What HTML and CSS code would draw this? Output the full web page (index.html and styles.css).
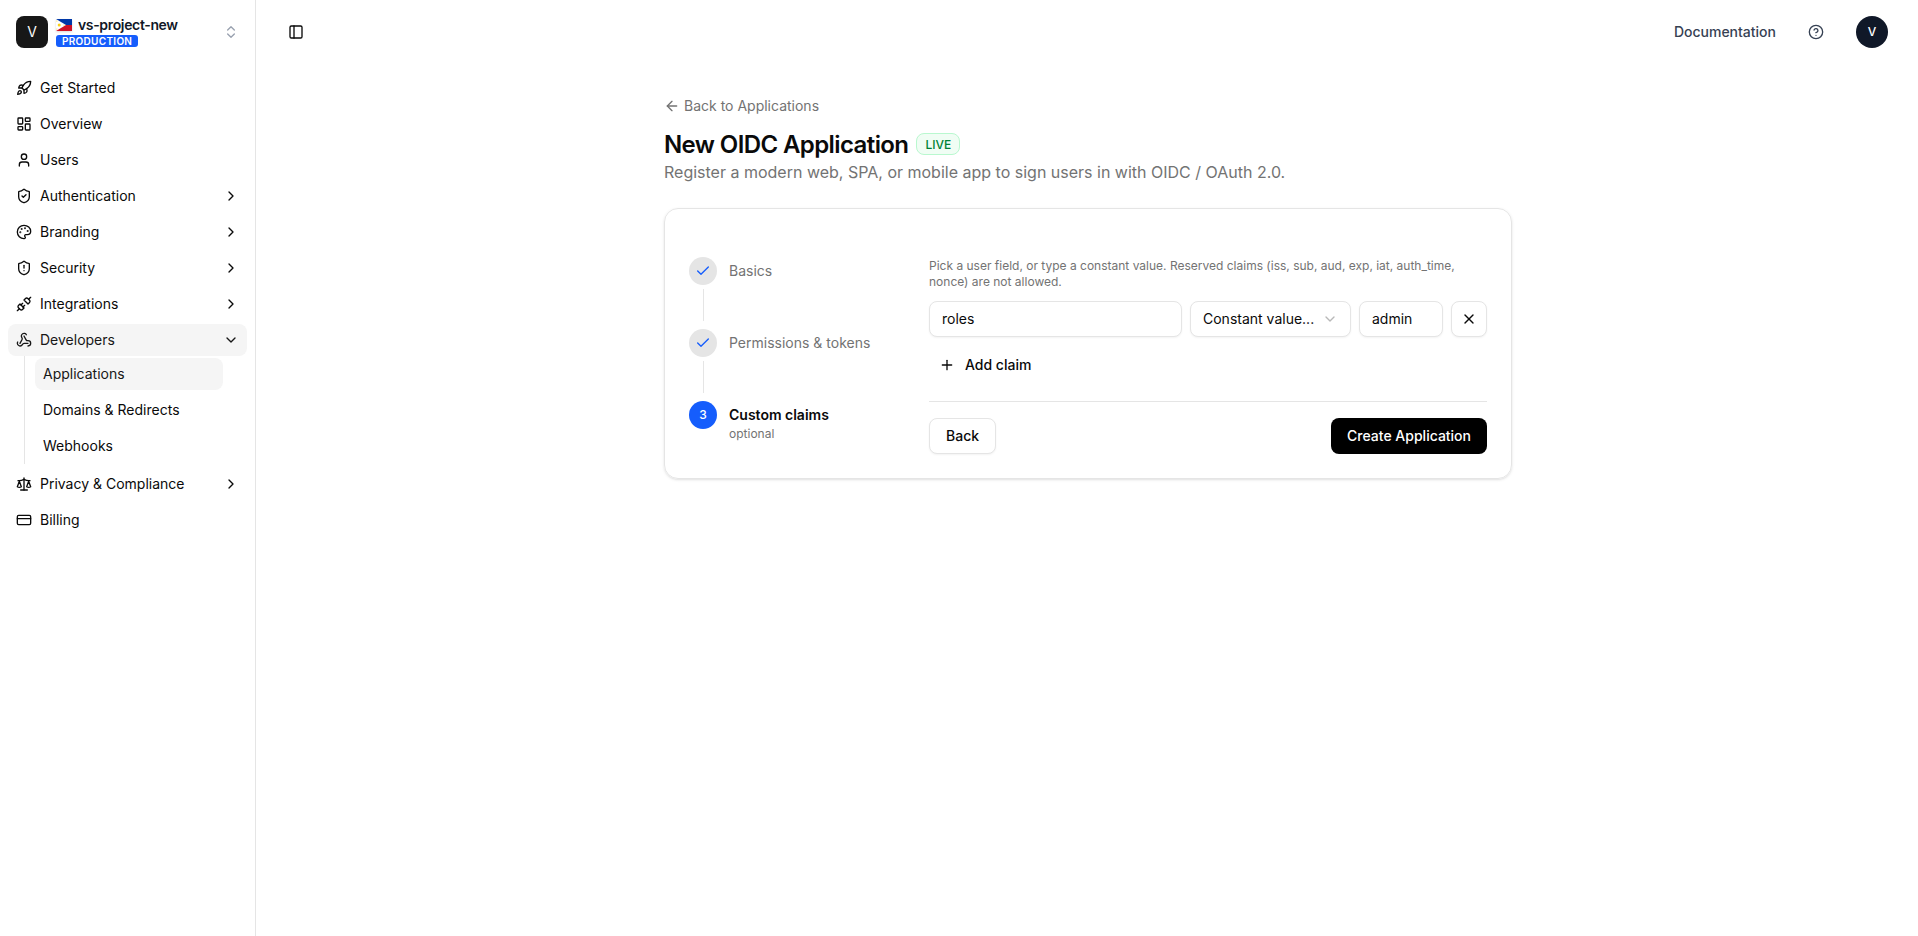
FILE: index.html
```html
<!DOCTYPE html>
<html lang="en">
<head>
    <meta charset="UTF-8">
    <meta name="viewport" content="width=device-width, initial-scale=1.0">
    <title>New OIDC Application</title>
    <link rel="stylesheet" href="styles.css">
</head>
<body>

<aside class="sidebar">
    <div class="project">
        <div class="project-logo">V</div>
        <div class="project-info">
            <div class="project-name">
                <svg class="flag" viewBox="0 0 16 12">
                    <rect width="16" height="6" fill="#0038a8"/>
                    <rect y="6" width="16" height="6" fill="#ce1126"/>
                    <path d="M0 0L10 6L0 12Z" fill="#fff"/>
                    <circle cx="3.2" cy="6" r="1.5" fill="#fcd116"/>
                    <circle cx="0.9" cy="1.9" r=".5" fill="#fcd116"/>
                    <circle cx="0.9" cy="10.1" r=".5" fill="#fcd116"/>
                    <circle cx="8" cy="6" r=".5" fill="#fcd116"/>
                </svg>
                <span>vs-project-new</span>
            </div>
            <span class="env">PRODUCTION</span>
        </div>
        <svg class="icon switcher" viewBox="0 0 24 24"><path d="m7 15 5 5 5-5"/><path d="m7 9 5-5 5 5"/></svg>
    </div>

    <nav class="nav">
        <a class="nav-item">
            <svg class="icon" viewBox="0 0 24 24"><path d="M4.5 16.5c-1.5 1.26-2 5-2 5s3.74-.5 5-2c.71-.84.7-2.13-.09-2.91a2.18 2.18 0 0 0-2.91-.09z"/><path d="m12 15-3-3a22 22 0 0 1 2-3.95A12.88 12.88 0 0 1 22 2c0 2.72-.78 7.5-6 11a22.35 22.35 0 0 1-4 2z"/><path d="M9 12H4s.55-3.03 2-4c1.62-1.08 5 0 5 0"/><path d="M12 15v5s3.03-.55 4-2c1.08-1.62 0-5 0-5"/></svg>
            <span>Get Started</span>
        </a>
        <a class="nav-item">
            <svg class="icon" viewBox="0 0 24 24"><rect width="7" height="9" x="3" y="3" rx="1"/><rect width="7" height="5" x="14" y="3" rx="1"/><rect width="7" height="9" x="14" y="12" rx="1"/><rect width="7" height="5" x="3" y="16" rx="1"/></svg>
            <span>Overview</span>
        </a>
        <a class="nav-item">
            <svg class="icon" viewBox="0 0 24 24"><path d="M19 21v-2a4 4 0 0 0-4-4H9a4 4 0 0 0-4 4v2"/><circle cx="12" cy="7" r="4"/></svg>
            <span>Users</span>
        </a>
        <a class="nav-item">
            <svg class="icon" viewBox="0 0 24 24"><path d="M20 13c0 5-3.5 7.5-7.66 8.95a1 1 0 0 1-.67-.01C7.5 20.5 4 18 4 13V6a1 1 0 0 1 1-1c2 0 4.5-1.2 6.24-2.72a1.17 1.17 0 0 1 1.52 0C14.51 3.81 17 5 19 5a1 1 0 0 1 1 1z"/><path d="m9 12 2 2 4-4"/></svg>
            <span>Authentication</span>
            <svg class="icon chevron" viewBox="0 0 24 24"><path d="m9 18 6-6-6-6"/></svg>
        </a>
        <a class="nav-item">
            <svg class="icon" viewBox="0 0 24 24"><path d="M12 22a1 1 0 0 1 0-20 10 9 0 0 1 10 9 5 5 0 0 1-5 5h-2.25a1.75 1.75 0 0 0-1.4 2.8l.3.4a1.75 1.75 0 0 1-1.4 2.8z"/><circle cx="13.5" cy="6.5" r=".5" fill="currentColor"/><circle cx="17.5" cy="10.5" r=".5" fill="currentColor"/><circle cx="6.5" cy="12.5" r=".5" fill="currentColor"/><circle cx="8.5" cy="7.5" r=".5" fill="currentColor"/></svg>
            <span>Branding</span>
            <svg class="icon chevron" viewBox="0 0 24 24"><path d="m9 18 6-6-6-6"/></svg>
        </a>
        <a class="nav-item">
            <svg class="icon" viewBox="0 0 24 24"><path d="M20 13c0 5-3.5 7.5-7.66 8.95a1 1 0 0 1-.67-.01C7.5 20.5 4 18 4 13V6a1 1 0 0 1 1-1c2 0 4.5-1.2 6.24-2.72a1.17 1.17 0 0 1 1.52 0C14.51 3.81 17 5 19 5a1 1 0 0 1 1 1z"/><path d="M12 8v4"/><path d="M12 16h.01"/></svg>
            <span>Security</span>
            <svg class="icon chevron" viewBox="0 0 24 24"><path d="m9 18 6-6-6-6"/></svg>
        </a>
        <a class="nav-item">
            <svg class="icon" viewBox="0 0 24 24"><path d="m19 5 3-3"/><path d="m2 22 3-3"/><path d="M6.3 20.3a2.4 2.4 0 0 0 3.4 0L12 18l-6-6-2.3 2.3a2.4 2.4 0 0 0 0 3.4Z"/><path d="M7.5 13.5 10 11"/><path d="M10.5 16.5 13 14"/><path d="m12 6 6 6 2.3-2.3a2.4 2.4 0 0 0 0-3.4l-2.6-2.6a2.4 2.4 0 0 0-3.4 0Z"/></svg>
            <span>Integrations</span>
            <svg class="icon chevron" viewBox="0 0 24 24"><path d="m9 18 6-6-6-6"/></svg>
        </a>
        <div class="nav-group">
            <a class="nav-item active">
                <svg class="icon" viewBox="0 0 24 24"><path d="M18 16.98h-5.99c-1.1 0-1.95.94-2.48 1.9A4 4 0 0 1 2 17c.01-.7.2-1.4.57-2"/><path d="m6 17 3.13-5.78c.53-.97.1-2.18-.5-3.1a4 4 0 1 1 6.89-4.06"/><path d="m12 6 3.13 5.73C15.66 12.7 16.9 13 18 13a4 4 0 0 1 0 8"/></svg>
                <span>Developers</span>
                <svg class="icon chevron" viewBox="0 0 24 24"><path d="m6 9 6 6 6-6"/></svg>
            </a>
            <div class="subnav">
                <a class="subnav-item active">Applications</a>
                <a class="subnav-item">Domains &amp; Redirects</a>
                <a class="subnav-item">Webhooks</a>
            </div>
        </div>
        <a class="nav-item">
            <svg class="icon" viewBox="0 0 24 24"><path d="m16 16 3-8 3 8c-.87.65-1.92 1-3 1s-2.13-.35-3-1Z"/><path d="m2 16 3-8 3 8c-.87.65-1.92 1-3 1s-2.13-.35-3-1Z"/><path d="M7 21h10"/><path d="M12 3v18"/><path d="M3 7h2c2 0 5-1 7-2 2 1 5 2 7 2h2"/></svg>
            <span>Privacy &amp; Compliance</span>
            <svg class="icon chevron" viewBox="0 0 24 24"><path d="m9 18 6-6-6-6"/></svg>
        </a>
        <a class="nav-item">
            <svg class="icon" viewBox="0 0 24 24"><rect width="20" height="14" x="2" y="5" rx="2"/><path d="M2 10h20"/></svg>
            <span>Billing</span>
        </a>
    </nav>
</aside>

<div class="page">
    <header class="topbar">
        <svg class="icon" viewBox="0 0 24 24"><rect width="18" height="18" x="3" y="3" rx="2"/><path d="M9 3v18"/></svg>
        <div class="topbar-right">
            <a class="docs-link">Documentation</a>
            <svg class="icon help" viewBox="0 0 24 24"><circle cx="12" cy="12" r="10"/><path d="M9.09 9a3 3 0 0 1 5.83 1c0 2-3 3-3 3"/><path d="M12 17h.01"/></svg>
            <div class="avatar">V</div>
        </div>
    </header>

    <main class="content">
        <a class="back-link">
            <svg class="icon" viewBox="0 0 24 24"><path d="m12 19-7-7 7-7"/><path d="M19 12H5"/></svg>
            <span>Back to Applications</span>
        </a>
        <div class="title-row">
            <h1>New OIDC Application</h1>
            <span class="live">LIVE</span>
        </div>
        <p class="subtitle">Register a modern web, SPA, or mobile app to sign users in with OIDC / OAuth 2.0.</p>

        <div class="card">
            <div class="steps">
                <div class="step done">
                    <div class="step-marker">
                        <div class="step-circle"><svg class="icon" viewBox="0 0 24 24"><path d="M20 6 9 17l-5-5"/></svg></div>
                        <div class="step-line"></div>
                    </div>
                    <div class="step-label">Basics</div>
                </div>
                <div class="step done">
                    <div class="step-marker">
                        <div class="step-circle"><svg class="icon" viewBox="0 0 24 24"><path d="M20 6 9 17l-5-5"/></svg></div>
                        <div class="step-line"></div>
                    </div>
                    <div class="step-label">Permissions &amp; tokens</div>
                </div>
                <div class="step current">
                    <div class="step-marker">
                        <div class="step-circle">3</div>
                    </div>
                    <div class="step-label">Custom claims<small>optional</small></div>
                </div>
            </div>

            <form class="claims">
                <p class="hint">Pick a user field, or type a constant value. Reserved claims (iss, sub, aud, exp, iat, auth_time, nonce) are not allowed.</p>
                <div class="claim-row">
                    <input class="field claim-name" type="text" value="roles">
                    <button class="field claim-source" type="button">
                        <span>Constant value...</span>
                        <svg class="icon" viewBox="0 0 24 24"><path d="m6 9 6 6 6-6"/></svg>
                    </button>
                    <input class="field claim-value" type="text" value="admin">
                    <button class="field remove" type="button">
                        <svg class="icon" viewBox="0 0 24 24"><path d="M18 6 6 18"/><path d="m6 6 12 12"/></svg>
                    </button>
                </div>
                <button class="add-claim" type="button">
                    <svg class="icon" viewBox="0 0 24 24"><path d="M5 12h14"/><path d="M12 5v14"/></svg>
                    <span>Add claim</span>
                </button>
                <div class="form-footer">
                    <button class="btn btn-outline" type="button">Back</button>
                    <button class="btn btn-primary" type="button">Create Application</button>
                </div>
            </form>
        </div>
    </main>
</div>

</body>
</html>
```
FILE: styles.css
```css
* {
    margin: 0;
    padding: 0;
    box-sizing: border-box;
}

body {
    font-family: Inter, sans-serif;
    font-size: 14px;
    line-height: 20px;
    color: #0a0a0a;
    background-color: #fff;
    display: flex;
    min-height: 100vh;
}

button,
input {
    font-family: inherit;
    font-size: 14px;
    line-height: 20px;
    color: inherit;
}

.icon {
    width: 16px;
    height: 16px;
    flex-shrink: 0;
    fill: none;
    stroke: currentColor;
    stroke-width: 2;
    stroke-linecap: round;
    stroke-linejoin: round;
}

/* Sidebar */
.sidebar {
    width: 256px;
    flex-shrink: 0;
    border-right: 1px solid #e5e5e5;
}

.project {
    display: flex;
    align-items: center;
    gap: 8px;
    height: 64px;
    padding: 0 16px;
}

.project-logo {
    width: 32px;
    height: 32px;
    display: flex;
    align-items: center;
    justify-content: center;
    border-radius: 8px;
    background-color: #171717;
    color: #fafafa;
}

.project-info {
    display: flex;
    flex-direction: column;
    align-items: flex-start;
    flex: 1;
    padding-bottom: 2px;
}

.project-name {
    display: flex;
    align-items: center;
    gap: 6px;
    height: 20px;
    font-weight: 600;
    letter-spacing: -0.35px;
    color: #111827;
}

.flag {
    width: 16px;
    height: 12px;
    box-shadow: 0 1px 2px rgba(0, 0, 0, 0.15);
}

.env {
    height: 12px;
    padding: 0 6px;
    border-radius: 3px;
    background-color: #155dfc;
    color: #fff;
    font-size: 10px;
    font-weight: 600;
    line-height: 12px;
    letter-spacing: 0.3px;
}

.switcher {
    color: #99a1af;
}

.nav {
    display: flex;
    flex-direction: column;
    gap: 4px;
    padding: 8px;
}

.nav-item {
    display: flex;
    align-items: center;
    gap: 8px;
    height: 32px;
    padding: 0 8px;
    border-radius: 8px;
}

.nav-item.active,
.subnav-item.active {
    background-color: #f5f5f5;
    color: #171717;
}

.chevron {
    margin-left: auto;
}

.subnav {
    display: flex;
    flex-direction: column;
    gap: 4px;
    margin: 0 14px 0 16px;
    padding: 2px 10px;
    border-left: 1px solid #e5e5e5;
}

.subnav-item {
    height: 32px;
    padding: 0 8px;
    line-height: 32px;
    border-radius: 8px;
}

/* Top bar */
.page {
    flex: 1;
}

.topbar {
    display: flex;
    align-items: center;
    justify-content: space-between;
    height: 64px;
    padding: 0 30px 0 32px;
}

.topbar-right {
    display: flex;
    align-items: center;
    color: #364153;
}

.docs-link {
    font-weight: 500;
}

.help {
    margin: 0 32px;
}

.avatar {
    width: 32px;
    height: 32px;
    display: flex;
    align-items: center;
    justify-content: center;
    border-radius: 50%;
    background-color: #101828;
    color: #fff;
    font-size: 12px;
    font-weight: 500;
}

/* Content */
.content {
    width: 848px;
    margin: 0 auto;
    padding-top: 32px;
    position: relative;
    left: 1px;
}

.back-link {
    display: flex;
    align-items: center;
    gap: 4px;
    color: #737373;
}

.title-row {
    display: flex;
    align-items: center;
    gap: 8px;
    margin-top: 12px;
}

h1 {
    height: 32px;
    font-size: 24px;
    font-weight: 600;
    line-height: 34px;
    letter-spacing: -0.6px;
}

.live {
    height: 22px;
    padding: 2px 8px;
    border: 1px solid #b9f8cf;
    border-radius: 8px;
    background-color: #f0fdf4;
    color: #008236;
    font-size: 12px;
    font-weight: 500;
    line-height: 18px;
}

.subtitle {
    font-size: 16px;
    line-height: 24px;
    color: #737373;
}

.card {
    display: flex;
    margin-top: 24px;
    padding: 48px 24px 24px;
    border: 1px solid #e5e5e5;
    border-radius: 14px;
    box-shadow: 0 1px 3px rgba(0, 0, 0, 0.1), 0 1px 2px -1px rgba(0, 0, 0, 0.1);
}

/* Steps */
.steps {
    width: 240px;
    flex-shrink: 0;
}

.step {
    display: flex;
    gap: 12px;
    color: #737373;
}

.step-circle {
    width: 28px;
    height: 28px;
    display: flex;
    align-items: center;
    justify-content: center;
    border-radius: 50%;
    background-color: #e5e5e5;
    color: #155dfc;
    font-size: 12px;
    font-weight: 500;
}

.step-line {
    width: 1px;
    height: 32px;
    margin: 4px 0 8px 14px;
    background-color: #e5e5e5;
}

.step-label {
    padding-top: 4px;
}

.step-label small {
    display: block;
    margin-top: 1px;
    font-size: 12px;
    font-weight: 400;
    line-height: 16px;
    color: #737373;
}

.step.current .step-circle {
    background-color: #155dfc;
    color: #fff;
}

.step.current .step-label {
    font-weight: 600;
    color: #0a0a0a;
}

/* Claims form */
.claims {
    flex: 1;
}

.hint {
    padding-top: 1px;
    font-size: 12px;
    line-height: 16px;
    color: #737373;
}

.claim-row {
    display: flex;
    gap: 8px;
    margin-top: 11px;
}

.field {
    height: 36px;
    padding: 0 12px;
    border: 1px solid #e5e5e5;
    border-radius: 8px;
    background-color: #fff;
    box-shadow: 0 1px 2px rgba(0, 0, 0, 0.05);
}

input.field {
    padding-bottom: 2px;
}

.claim-name {
    flex: 1;
    min-width: 0;
}

.claim-source {
    display: flex;
    align-items: center;
    justify-content: space-between;
    width: 161px;
}

.claim-source .icon {
    color: #737373;
    opacity: 0.5;
}

.claim-value {
    width: 84px;
}

.remove {
    display: flex;
    align-items: center;
    justify-content: center;
    width: 36px;
    padding: 0;
}

.add-claim {
    display: flex;
    align-items: center;
    gap: 10px;
    height: 32px;
    margin-top: 12px;
    padding: 0 10px;
    border: none;
    background: none;
    font-weight: 500;
}

.form-footer {
    display: flex;
    justify-content: space-between;
    margin-top: 20px;
    padding-top: 16px;
    border-top: 1px solid #e5e5e5;
}

.btn {
    height: 36px;
    padding: 0 16px;
    border: none;
    border-radius: 8px;
    font-weight: 500;
}

.btn-outline {
    border: 1px solid #e5e5e5;
    background-color: #fff;
    box-shadow: 0 1px 2px rgba(0, 0, 0, 0.05);
}

.btn-primary {
    background-color: #000;
    color: #fff;
}
```
